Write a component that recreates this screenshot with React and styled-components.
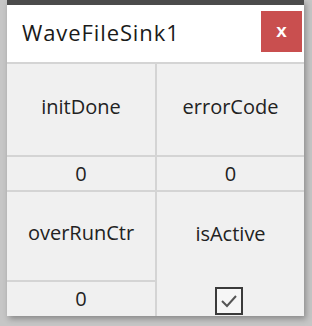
import React from 'react';
import styled, { createGlobalStyle } from 'styled-components';

const GlobalStyle = createGlobalStyle`
  html, body {
    margin: 0;
    padding: 0;
    background: #c6c6c6;
    width: 312px;
    height: 326px;
    overflow: hidden;
  }
`;

const Page = styled.div`
  padding-left: 7px;
  width: 312px;
  height: 326px;
  box-sizing: border-box;
  font-family: 'Open Sans', 'Noto Sans', sans-serif;
`;

const Window = styled.section`
  width: 297px;
  background: #fff;
  border-top: 5px solid #4b4b4b;
  box-shadow: 2px 3px 6px rgba(0, 0, 0, 0.3);
`;

const TitleBar = styled.header`
  height: 57px;
  display: flex;
  align-items: center;
  justify-content: space-between;
  padding: 0 2px 0 15px;
`;

const Title = styled.h1`
  margin: 0 0 4px;
  font-size: 22px;
  font-weight: 400;
  letter-spacing: 0.9px;
  color: #1a1a1a;
`;

const CloseButton = styled.button`
  width: 41px;
  height: 41px;
  margin-bottom: 4px;
  border: none;
  background: #c94f4f;
  color: #fff;
  font-family: 'Liberation Sans', Arial, sans-serif;
  font-size: 19px;
  font-weight: 700;
  line-height: 1;
  padding: 0 0 3px;
  cursor: pointer;
`;

const Grid = styled.div`
  display: grid;
  grid-template-columns: 148px 147px;
  grid-template-rows: 91px 33px 88px 34px;
  gap: 2px;
  background: #d4d4d4;
  border-top: 2px solid #d4d4d4;
`;

const Cell = styled.div`
  background: #f0f0f0;
  display: flex;
  flex-direction: column;
  align-items: center;
  justify-content: ${(p) => (p.$spread ? 'space-between' : 'center')};
  padding-bottom: ${(p) => (p.$label ? '6px' : '0')};
  grid-column: ${(p) => p.$col || 'auto'};
  grid-row: ${(p) => p.$row || 'auto'};
  font-size: 20px;
  color: #222;
  line-height: 1;
`;

const SpacerLabel = styled.span`
  margin-top: 32px;
`;

const Check = styled.span`
  width: 24px;
  height: 24px;
  border: 2px solid #3a3a3a;
  background: #f6f6f6;
  display: flex;
  align-items: center;
  justify-content: center;
  margin-bottom: 1px;
  margin-right: 3px;
`;

export default function App() {
  return (
    <>
      <GlobalStyle />
      <Page>
        <Window>
          <TitleBar>
            <Title>WaveFileSink1</Title>
            <CloseButton>x</CloseButton>
          </TitleBar>
          <Grid>
            <Cell $label>initDone</Cell>
            <Cell $label>errorCode</Cell>
            <Cell>0</Cell>
            <Cell>0</Cell>
            <Cell $label $col="1" $row="3">overRunCtr</Cell>
            <Cell $col="1" $row="4">0</Cell>
            <Cell $col="2" $row="3 / 5" $spread>
              <SpacerLabel>isActive</SpacerLabel>
              <Check>
                <svg width="20" height="20" viewBox="0 0 20 20">
                  <path d="M3 10 L8 15 L17 5" fill="none" stroke="#555" strokeWidth="2" />
                </svg>
              </Check>
            </Cell>
          </Grid>
        </Window>
      </Page>
    </>
  );
}
